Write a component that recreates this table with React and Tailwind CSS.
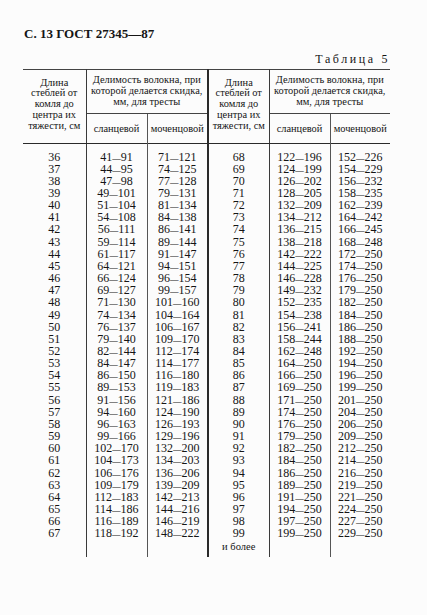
import React from "react";

const left = [
  ["36","41","91","71","121"],["37","44","95","74","125"],["38","47","98","77","128"],["39","49","101","79","131"],
  ["40","51","104","81","134"],["41","54","108","84","138"],["42","56","111","86","141"],["43","59","114","89","144"],
  ["44","61","117","91","147"],["45","64","121","94","151"],["46","66","124","96","154"],["47","69","127","99","157"],
  ["48","71","130","101","160"],["49","74","134","104","164"],["50","76","137","106","167"],["51","79","140","109","170"],
  ["52","82","144","112","174"],["53","84","147","114","177"],["54","86","150","116","180"],["55","89","153","119","183"],
  ["56","91","156","121","186"],["57","94","160","124","190"],["58","96","163","126","193"],["59","99","166","129","196"],
  ["60","102","170","132","200"],["61","104","173","134","203"],["62","106","176","136","206"],["63","109","179","139","209"],
  ["64","112","183","142","213"],["65","114","186","144","216"],["66","116","189","146","219"],["67","118","192","148","222"],
];
const right = [
  ["68","122","196","152","226"],["69","124","199","154","229"],["70","126","202","156","232"],["71","128","205","158","235"],
  ["72","132","209","162","239"],["73","134","212","164","242"],["74","136","215","166","245"],["75","138","218","168","248"],
  ["76","142","222","172","250"],["77","144","225","174","250"],["78","146","228","176","250"],["79","149","232","179","250"],
  ["80","152","235","182","250"],["81","154","238","184","250"],["82","156","241","186","250"],["83","158","244","188","250"],
  ["84","162","248","192","250"],["85","164","250","194","250"],["86","166","250","196","250"],["87","169","250","199","250"],
  ["88","171","250","201","250"],["89","174","250","204","250"],["90","176","250","206","250"],["91","179","250","209","250"],
  ["92","182","250","212","250"],["93","184","250","214","250"],["94","186","250","216","250"],["95","189","250","219","250"],
  ["96","191","250","221","250"],["97","194","250","224","250"],["98","197","250","227","250"],["99","199","250","229","250"],
];

function R({ a, b }) {
  return (
    <>
      {a}
      <span className="text-[8.5px] leading-[0]">—</span>
      {b}
    </>
  );
}

function C({ children }) {
  return <div className="h-[12.16px] leading-[12.16px] overflow-visible whitespace-nowrap">{children}</div>;
}

const serif = { fontFamily: '"Liberation Serif", "DejaVu Serif", serif' };

export default function App() {
  const rows = [];
  for (let i = 0; i < 33; i++) {
    const l = left[i];
    const r = right[i];
    rows.push(
      <tr key={i}>
        <td className="p-0 text-center border-r border-[#3a3a3a]"><C>{l ? l[0] : ""}</C></td>
        <td className="p-0 text-center border-r border-[#555]"><C>{l ? <R a={l[1]} b={l[2]} /> : ""}</C></td>
        <td className="p-0 text-center border-r-2 border-[#2a2a2a]"><C>{l ? <R a={l[3]} b={l[4]} /> : ""}</C></td>
        <td className="p-0 text-center border-r border-[#3a3a3a]">
          <C>{r ? r[0] : <span className="text-[10.5px]">и более</span>}</C>
        </td>
        <td className="p-0 text-center border-r border-[#555]"><C>{r ? <R a={r[1]} b={r[2]} /> : ""}</C></td>
        <td className="p-0 text-center"><C>{r ? <R a={r[3]} b={r[4]} /> : ""}</C></td>
      </tr>
    );
  }

  const hdr1 = (
    <>
      Длина<br />стеблей от<br />комля до<br />центра их<br />тяжести, см
    </>
  );
  const hdr2 = (
    <>
      Делимость волокна, при<br />которой делается скидка,<br />мм, для тресты
    </>
  );

  const spacer = (h, k) => (
    <tr key={k}>
      <td className="p-0 border-r border-[#3a3a3a]"><div className={h}></div></td>
      <td className="p-0 border-r border-[#555]"><div className={h}></div></td>
      <td className="p-0 border-r-2 border-[#2a2a2a]"><div className={h}></div></td>
      <td className="p-0 border-r border-[#3a3a3a]"><div className={h}></div></td>
      <td className="p-0 border-r border-[#555]"><div className={h}></div></td>
      <td className="p-0"><div className={h}></div></td>
    </tr>
  );

  return (
    <div className="w-[427px] h-[615px] bg-[#fcfcfc] text-[#151515] overflow-hidden" style={serif}>
      <div className="pt-[26px] pl-[24px] text-[13px] font-bold leading-[16px]">С. 13 ГОСТ 27345—87</div>
      <div className="w-[390px] mt-[10px] text-right text-[12px] leading-[14px] tracking-[2.6px]">
        Таблица 5
      </div>
      <table className="ml-[23px] mt-[3px] w-[367px] table-fixed border-collapse">
        <colgroup>
          <col className="w-[63px]" />
          <col className="w-[61px]" />
          <col className="w-[61px]" />
          <col className="w-[61px]" />
          <col className="w-[61px]" />
          <col className="w-[60px]" />
        </colgroup>
        <thead className="text-[10.4px] leading-[10.8px]">
          <tr className="h-[44px] border-t border-[#444]">
            <td rowSpan={2} className="p-0 pb-[4px] text-center align-middle border-r border-[#3a3a3a] border-b-[1.5px] border-b-[#2a2a2a]">{hdr1}</td>
            <td colSpan={2} className="p-0 text-center align-middle border-r-2 border-[#2a2a2a] border-b border-b-[#444]">{hdr2}</td>
            <td rowSpan={2} className="p-0 pb-[4px] text-center align-middle border-r border-[#3a3a3a] border-b-[1.5px] border-b-[#2a2a2a]">{hdr1}</td>
            <td colSpan={2} className="p-0 text-center align-middle border-b border-b-[#444]">{hdr2}</td>
          </tr>
          <tr className="h-[30px] border-b-[1.5px] border-[#2a2a2a]">
            <td className="p-0 pt-[2px] text-center border-r border-[#555]">сланцевой</td>
            <td className="p-0 pt-[2px] text-center border-r-2 border-[#2a2a2a]">моченцовой</td>
            <td className="p-0 pt-[2px] text-center border-r border-[#555]">сланцевой</td>
            <td className="p-0 pt-[2px] text-center">моченцовой</td>
          </tr>
        </thead>
        <tbody className="text-[12px]">
          {spacer("h-[6.5px]", "top")}
          {rows}
          {spacer("h-[5px]", "bottom")}
        </tbody>
      </table>
    </div>
  );
}
